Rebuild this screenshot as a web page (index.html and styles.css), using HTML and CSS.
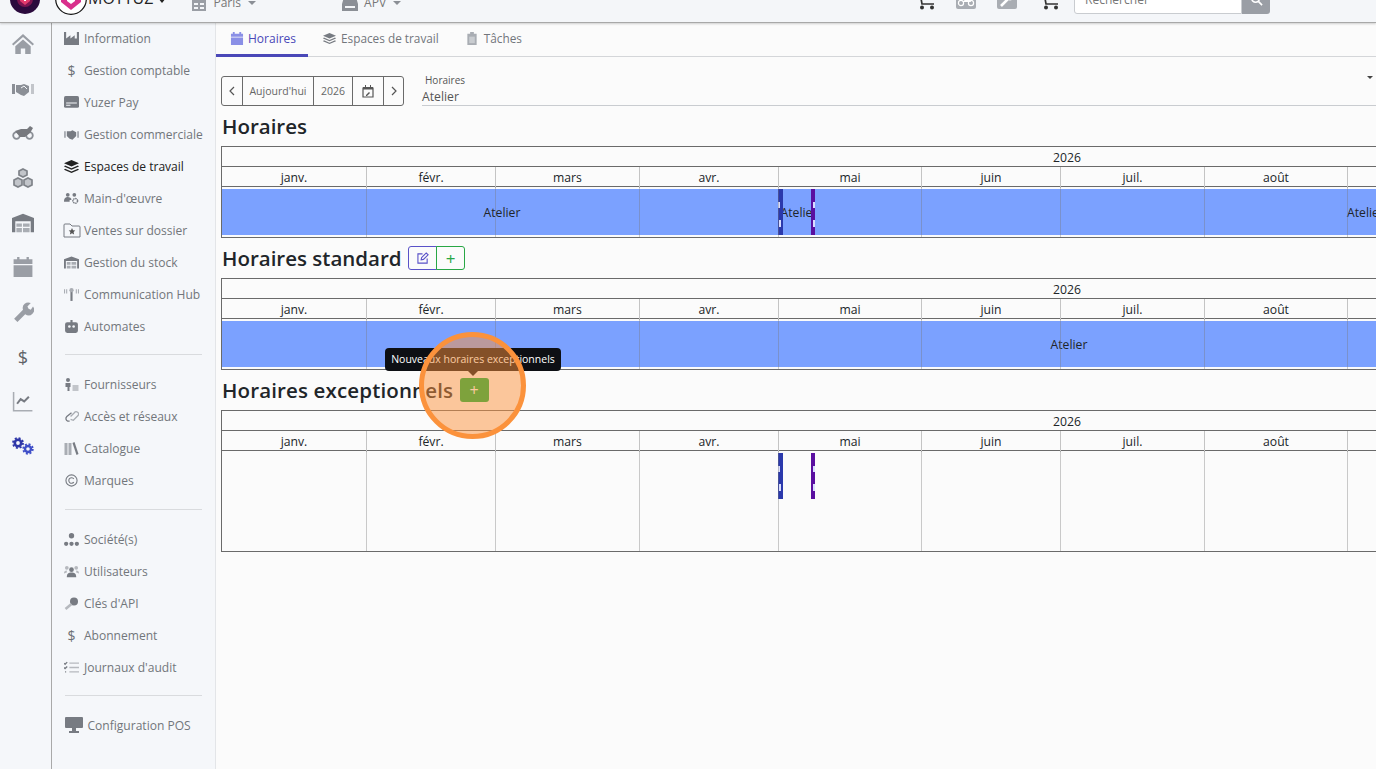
FILE: index.html
```html
<!DOCTYPE html>
<html lang="fr">
<head>
<meta charset="utf-8">
<title>Horaires</title>
<link rel="stylesheet" href="styles.css">
</head>
<body>
<header class="topbar">
  <div class="brand-dot"><svg viewBox="0 0 30 30" width="30" height="30"><circle cx="15" cy="15" r="15" fill="#2b0a3d"/><circle cx="15" cy="15" r="8" fill="#7a1450"/><path d="M15 9l5 3v5l-5 4-5-4v-5z" fill="#e23b6d"/><path d="M14 11h2v6h-2z" fill="#fff"/></svg></div>
  <div class="brand-logo"><svg viewBox="0 0 32 32" width="32" height="32"><circle cx="16" cy="16" r="15.3" fill="#fff" stroke="#111" stroke-width="1.2"/><path d="M6 10l10-6 10 6v9l-10 8-10-8z" fill="#d92f8c"/><path d="M16 4l10 6-10 5-10-5z" fill="#f28a3c"/><path d="M12 12l4-2 4 2v6l-4 3-4-3z" fill="#fff"/></svg></div>
  <div class="brand-name">MOTYUZ</div><span class="caret caret-dark"></span>
  <div class="scope scope-paris">
    <svg class="scope-icon" viewBox="0 0 16 16"><path d="M1 1h14v15H1z" fill="#9a9ea5"/><path d="M3 8h4v2H3zm6 0h4v2H9zm-6 4h4v2H3zm6 0h4v2H9z" fill="#f4f6f9"/></svg>
    <span>Paris</span><span class="caret"></span>
  </div>
  <div class="scope scope-apv">
    <svg class="scope-icon" viewBox="0 0 16 16"><path d="M2 2h12l2 7v7H0V9z" fill="#8b8f96"/><path d="M3 11h10v2H3z" fill="#f4f6f9"/></svg>
    <span>APV</span><span class="caret"></span>
  </div>
  <div class="top-actions">
    <svg class="ta ta-cart" viewBox="0 0 20 30"><path d="M0 4h3l3 17h12M5 16h14" fill="none" stroke="#333" stroke-width="1.700"/><circle cx="6" cy="24.500" r="2" fill="#333"/><circle cx="16" cy="24.500" r="2" fill="#333"/></svg>
    <svg class="ta ta-bike" viewBox="0 0 20 30"><rect y="6" width="20" height="19" rx="2" fill="#a9adb3"/><circle cx="5" cy="19" r="2.6" fill="none" stroke="#fff" stroke-width="1.2"/><circle cx="15" cy="19" r="2.6" fill="none" stroke="#fff" stroke-width="1.2"/><path d="M6 18l4-3h4l1 3z" fill="#fff"/></svg>
    <svg class="ta ta-wrench" viewBox="0 0 20 30"><rect y="6" width="20" height="19" rx="2" fill="#a9adb3"/><path d="M4 22l7-7" stroke="#fff" stroke-width="2.6"/><circle cx="13" cy="13" r="3.4" fill="#fff"/></svg>
    <svg class="ta ta-cart2" viewBox="0 0 22 30"><path d="M0 4h3l3 17h12M5 16h11" fill="none" stroke="#333" stroke-width="1.700"/><rect x="7" y="8" width="9" height="6" fill="#a9adb3"/><path d="M18 12h4l-2 2z" fill="#333"/><circle cx="6" cy="24.500" r="2" fill="#333"/><circle cx="16" cy="24.500" r="2" fill="#333"/></svg>
    <div class="search"><div class="search-input">Rechercher</div><div class="search-btn"><svg viewBox="0 0 14 14" width="13" height="13"><circle cx="6" cy="6" r="4" fill="none" stroke="#fff" stroke-width="1.8"/><path d="M9 9l4 4" stroke="#fff" stroke-width="1.8"/></svg></div></div>
  </div>
</header>

<div class="shell">
  <nav class="rail">
    <svg class="rail-i" viewBox="0 0 20 18"><path d="M10 0L0 9l1.2 1.3L10 2.6l8.8 7.7L20 9zM3 11v7h5v-5h4v5h5v-7l-7-6z" fill="#9a9ea5"/></svg>
    <svg class="rail-i" viewBox="0 0 22 14"><path d="M0 2h3v10H0z" fill="#8b8f96"/><path d="M19 2h3v10h-3z" fill="#c2c5ca"/><path d="M4 3h5l3-1 5 2v6l-5 4-3-1-5-3z" fill="#8b8f96"/><path d="M9 6l3-2 3 3" fill="none" stroke="#f5f7fa" stroke-width="1"/></svg>
    <svg class="rail-i" viewBox="0 0 22 14"><circle cx="4.500" cy="9.500" r="3.300" fill="none" stroke="#8b8f96" stroke-width="1.800"/><circle cx="17.500" cy="9.500" r="3.300" fill="none" stroke="#8b8f96" stroke-width="1.800"/><path d="M3 5l6-2h6l3-3 3 2-3 5-5 4H8z" fill="#77797e"/></svg>
    <svg class="rail-i" viewBox="0 0 20 20"><path d="M10 1l4 2v4l-4 2-4-2V3zM5 10l4 2v5l-4 2-4-2v-5zm10 0l4 2v5l-4 2-4-2v-5z" fill="#c2c5ca" stroke="#7f8389" stroke-width="1.700"/></svg>
    <svg class="rail-i" viewBox="0 0 20 17"><path d="M10 0L0 4v13h3V7h14v10h3V4z" fill="#777b82"/><path d="M4 9h5v3H4zm6 0h6v3h-6zM4 13h5v4H4zm6 0h6v4h-6z" fill="#a9adb3"/></svg>
    <svg class="rail-i" viewBox="0 0 16 17"><path d="M3 0h2v2h6V0h2v2h3v4H0V2h3zM0 7h16v10H0z" fill="#9a9ea5"/></svg>
    <svg class="rail-i" viewBox="0 0 18 18"><path d="M1 15l8-8a5 5 0 0 1 7-6l-3 3 1 2 2 1 2-3a5 5 0 0 1-7 7l-7 7z" fill="#9a9ea5"/></svg>
    <span class="rail-i rail-dollar">$</span>
    <svg class="rail-i" viewBox="0 0 18 17"><path d="M1 0v16h16" fill="none" stroke="#a9adb3" stroke-width="1.300"/><path d="M4 10l3-4 3 2 4-4" fill="none" stroke="#777b82" stroke-width="1.700"/></svg>
    <svg class="rail-i" viewBox="0 0 22 18"><circle cx="6" cy="6" r="3.200" fill="none" stroke="#2f37a8" stroke-width="2.600"/><circle cx="6" cy="6" r="5" fill="none" stroke="#2f37a8" stroke-width="1.800" stroke-dasharray="2 1.930"/><circle cx="16" cy="12" r="3" fill="none" stroke="#3f4fc8" stroke-width="2.400"/><circle cx="16" cy="12" r="4.800" fill="none" stroke="#3f4fc8" stroke-width="1.800" stroke-dasharray="2 1.770"/></svg>
  </nav>

  <aside class="menu">
    <a class="m"><svg viewBox="0 0 14 12"><path d="M0 0h2v6l4-3v3l4-3v3h2V0h2v12H0z" fill="#777b82"/></svg><span>Information</span></a>
    <a class="m"><span class="m-dollar">$</span><span>Gestion comptable</span></a>
    <a class="m"><svg viewBox="0 0 14 12"><rect width="14" height="11" rx="1.500" fill="#777b82"/><path d="M2 6h10v1H2zm0 2h4v1H2z" fill="#f5f7fa"/></svg><span>Yuzer Pay</span></a>
    <a class="m"><svg viewBox="0 0 16 11"><path d="M0 2h2v7H0zm14 0h2v7h-2z" fill="#a9adb3"/><path d="M3 2h4l2-1 4 2v4l-4 4-3-1-3-3z" fill="#777b82"/></svg><span>Gestion commerciale</span></a>
    <a class="m m-active"><svg viewBox="0 0 14 12"><path d="M7 0l7 3-7 3-7-3zM1 5l6 2.600L13 5l1 1-7 3-7-3zm0 3l6 2.600L13 8l1 1-7 3-7-3z" fill="#222"/></svg><span>Espaces de travail</span></a>
    <a class="m"><svg viewBox="0 0 16 13"><circle cx="4" cy="2.500" r="2" fill="#777b82"/><circle cx="11" cy="2.500" r="2" fill="#777b82"/><path d="M0 10c0-4 2-5 4-5s4 1 4 3H6v2z" fill="#777b82"/><circle cx="12" cy="9" r="2.500" fill="none" stroke="#777b82" stroke-width="1.600" stroke-dasharray="1.500 .6"/></svg><span>Main-d'œuvre</span></a>
    <a class="m m-wide"><svg viewBox="0 0 18 15"><path d="M1 14V2a1 1 0 0 1 1-1h5l2 2h7a1 1 0 0 1 1 1v10z" fill="none" stroke="#777b82"/><path d="M9 5l1 2.200 2.300.3-1.700 1.600.5 2.300-2.100-1.200-2.100 1.200.5-2.300-1.700-1.600 2.300-.3z" fill="#555"/></svg><span>Ventes sur dossier</span></a>
    <a class="m"><svg viewBox="0 0 16 13"><path d="M8 0L0 3v10h2V5h12v8h2V3z" fill="#777b82"/><path d="M3 6h4v3H3zm5 0h5v3H8zM3 10h4v3H3zm5 0h5v3H8z" fill="#a9adb3"/></svg><span>Gestion du stock</span></a>
    <a class="m"><svg viewBox="0 0 14 12"><path d="M6 3h2v9H6z" fill="#777b82"/><path d="M.5 1v4M2.500 1v4M11.500 1v4M13.500 1v4" stroke="#a9adb3"/><circle cx="7" cy="2" r="2" fill="#a9adb3"/></svg><span>Communication Hub</span></a>
    <a class="m"><svg viewBox="0 0 14 12"><path d="M6 0h2v2h3a2 2 0 0 1 2 2v6a2 2 0 0 1-2 2H3a2 2 0 0 1-2-2V4a2 2 0 0 1 2-2h3z" fill="#777b82"/><circle cx="5" cy="6" r="1.200" fill="#f5f7fa"/><circle cx="9" cy="6" r="1.200" fill="#f5f7fa"/></svg><span>Automates</span></a>
    <div class="m-sep m-sep-1"></div>
    <a class="m"><svg viewBox="0 0 14 13"><circle cx="3.500" cy="2" r="2" fill="#777b82"/><path d="M1 5h5v4H5v4H3V9H1z" fill="#777b82"/><path d="M8 7h6v6H8z" fill="#c2c5ca"/></svg><span>Fournisseurs</span></a>
    <a class="m"><svg viewBox="0 0 16 12"><path d="M6 11H4a3 3 0 0 1-1-5l5-4" fill="none" stroke="#777b82" stroke-width="1.400"/><path d="M7 6l4-4a2.500 2.500 0 0 1 4 3l-5 5-3-1" fill="none" stroke="#a9adb3" stroke-width="1.400"/></svg><span>Accès et réseaux</span></a>
    <a class="m"><svg viewBox="0 0 14 13"><path d="M0 1h3v12H0zm4 0h3v12H4z" fill="#a9adb3"/><path d="M8 1l2-1 4 12-2 1z" fill="#777b82"/></svg><span>Catalogue</span></a>
    <a class="m"><svg viewBox="0 0 14 14"><circle cx="7" cy="7" r="6" fill="none" stroke="#777b82" stroke-width="1.200"/><path d="M9.500 5.200a3 3 0 1 0 0 3.600" fill="none" stroke="#777b82" stroke-width="1.200"/></svg><span>Marques</span></a>
    <div class="m-sep m-sep-2"></div>
    <a class="m"><svg viewBox="0 0 14 12"><circle cx="7" cy="2.500" r="2.500" fill="#777b82"/><circle cx="2" cy="10" r="2" fill="#777b82"/><circle cx="7" cy="10" r="2" fill="#777b82"/><circle cx="12" cy="10" r="2" fill="#777b82"/></svg><span>Société(s)</span></a>
    <a class="m"><svg viewBox="0 0 16 12"><circle cx="3" cy="2" r="2" fill="#b6b9be"/><circle cx="13" cy="2" r="2" fill="#b6b9be"/><circle cx="8" cy="4" r="2.500" fill="#777b82"/><path d="M3 12c0-4 2-5 5-5s5 1 5 5z" fill="#777b82"/><path d="M0 8c0-2 1-3 3-3v2zm16 0c0-2-1-3-3-3v2z" fill="#b6b9be"/></svg><span>Utilisateurs</span></a>
    <a class="m"><svg viewBox="0 0 14 13"><circle cx="9.500" cy="4.500" r="4" fill="#777b82"/><path d="M7 7l-6 5" stroke="#b6b9be" stroke-width="2.600"/></svg><span>Clés d'API</span></a>
    <a class="m"><span class="m-dollar">$</span><span>Abonnement</span></a>
    <a class="m"><svg viewBox="0 0 14 12"><path d="M5 2h9M5 6h9M5 10h9" stroke="#b6b9be" stroke-width="1.200"/><path d="M0 2l1 1 2-2M0 6l1 1 2-2M1 10h1" fill="none" stroke="#777b82" stroke-width="1.200"/></svg><span>Journaux d'audit</span></a>
    <div class="m-sep m-sep-3"></div>
    <a class="m m-pos"><svg viewBox="0 0 18 16"><rect width="18" height="11" rx="1" fill="#777b82"/><path d="M7 11h4v3H7zM4 14h10v2H4z" fill="#777b82"/></svg><span>Configuration POS</span></a>
  </aside>

  <main class="main">
    <div class="tabs">
      <a class="tab tab-on"><svg viewBox="0 0 13 14"><path d="M2 0h2v2h5V0h2v2h2v3H0V2h2zM0 6h13v8H0z" fill="#8a8fe6"/></svg>Horaires</a>
      <a class="tab"><svg viewBox="0 0 14 12"><path d="M7 0l7 3-7 3-7-3zM1 5l6 2.600L13 5l1 1-7 3-7-3zm0 3l6 2.600L13 8l1 1-7 3-7-3z" fill="#777b82"/></svg>Espaces de travail</a>
      <a class="tab tab-last"><svg viewBox="0 0 10 14"><path d="M3 0h4v2h3v12H0V2h3z" fill="#a9adb3"/><path d="M2 5h6v7H2z" fill="#c9ccd0"/></svg>Tâches</a>
    </div>
    <div class="content">
      <div class="toolbar">
        <div class="btn-group">
          <button class="b b-nav"><svg viewBox="0 0 6 10" width="6" height="10"><path d="M5 1L1 5l4 4" fill="none" stroke="#555" stroke-width="1.200"/></svg></button>
          <button class="b b-today">Aujourd'hui</button>
          <button class="b b-year">2026</button>
          <button class="b b-cal"><svg viewBox="0 0 12 13" width="12" height="13"><path d="M1 3h10v9H1z" fill="none" stroke="#555" stroke-width="1.200"/><path d="M1 2h10v2.500H1zM3 0h1v2H3zm5 0h1v2H8z" fill="#555"/><path d="M4 10l3-3 1 1-3 3H4z" fill="#555"/></svg></button>
          <button class="b b-nav"><svg viewBox="0 0 6 10" width="6" height="10"><path d="M1 1l4 4-4 4" fill="none" stroke="#555" stroke-width="1.200"/></svg></button>
        </div>
        <div class="select">
          <div class="select-label">Horaires</div>
          <div class="select-value">Atelier</div>
          <span class="select-caret"></span>
        </div>
      </div>

      <section class="sec">
        <div class="sec-head"><h2>Horaires</h2></div>
        <div class="tl">
          <div class="tl-year">2026</div>
          <div class="tl-months"><div>janv.</div><div>févr.</div><div>mars</div><div>avr.</div><div>mai</div><div>juin</div><div>juil.</div><div>août</div><div>sept.</div><div>oct.</div><div>nov.</div><div>déc.</div></div>
          <div class="tl-body">
            <div class="tl-row">
              <div class="seg seg-a">Atelier</div>
              <div class="ev ev-blue"><i class="ev-m1"></i><i class="ev-m2"></i></div>
              <div class="seg seg-b">Atelier</div>
              <div class="ev ev-purple"><i class="ev-m1"></i><i class="ev-m2"></i></div>
              <div class="seg seg-c">Atelier</div>
            </div>
            <div class="tl-cols"><i></i><i></i><i></i><i></i><i></i><i></i><i></i><i></i><i></i><i></i><i></i><i></i></div>
          </div>
        </div>
      </section>

      <section class="sec">
        <div class="sec-head"><h2>Horaires standard</h2>
          <div class="head-btns">
            <button class="hb hb-edit"><svg viewBox="0 0 13 13" width="12" height="12"><path d="M11 7v5H1V2h5" fill="none" stroke="#5a52c8" stroke-width="1.200"/><path d="M5 6l5-5 2 2-5 5-2.500.5z" fill="none" stroke="#5a52c8" stroke-width="1.200"/></svg></button>
            <button class="hb hb-add">+</button>
          </div>
        </div>
        <div class="tl">
          <div class="tl-year">2026</div>
          <div class="tl-months"><div>janv.</div><div>févr.</div><div>mars</div><div>avr.</div><div>mai</div><div>juin</div><div>juil.</div><div>août</div><div>sept.</div><div>oct.</div><div>nov.</div><div>déc.</div></div>
          <div class="tl-body">
            <div class="tl-row"><div class="seg seg-full">Atelier</div></div>
            <div class="tl-cols"><i></i><i></i><i></i><i></i><i></i><i></i><i></i><i></i><i></i><i></i><i></i><i></i></div>
          </div>
        </div>
      </section>

      <section class="sec sec-exc">
        <div class="sec-head"><h2>Horaires exceptionnels</h2>
          <button class="hb-solid">+</button>
        </div>
        <div class="tl">
          <div class="tl-year">2026</div>
          <div class="tl-months"><div>janv.</div><div>févr.</div><div>mars</div><div>avr.</div><div>mai</div><div>juin</div><div>juil.</div><div>août</div><div>sept.</div><div>oct.</div><div>nov.</div><div>déc.</div></div>
          <div class="tl-body tl-body-tall">
            <div class="tl-row">
              <div class="gap-a"></div>
              <div class="ev ev-blue"><i class="ev-m1"></i><i class="ev-m2"></i></div>
              <div class="gap-b"></div>
              <div class="ev ev-purple"><i class="ev-m1"></i><i class="ev-m2"></i></div>
            </div>
            <div class="tl-cols"><i></i><i></i><i></i><i></i><i></i><i></i><i></i><i></i><i></i><i></i><i></i><i></i></div>
          </div>
        </div>
      </section>
    </div>
  </main>
</div>

<div class="tooltip">Nouveaux horaires exceptionnels</div>
<div class="spot"></div>
</body>
</html>
```
FILE: styles.css
```css
* { box-sizing: border-box; }
html, body { height: 100%; }
body {
  margin: 0;
  height: 769px;
  overflow: hidden;
  position: relative;
  font-family: "Open Sans", "Noto Sans", sans-serif;
  font-size: 12.050px;
  color: #212529;
  background: #fbfbfb;
}
svg { display: block; flex: none; }

/* top bar */
.topbar {
  height: 23px;
  display: flex;
  align-items: flex-end;
  overflow: hidden;
  background: #f4f6f9;
  border-bottom: 1px solid #a8a8a8;
  box-shadow: 0 1px 2px rgba(0,0,0,.18);
  position: relative;
  z-index: 2;
  padding-left: 10px;
  padding-bottom: 7px;
}
.brand-dot { margin-bottom: 1px; height: 30px; }
.brand-logo { margin-left: 15px; height: 32px; }
.brand-name { font-size: 16px; line-height: 24px; margin-left: 1px; color: #222; margin-bottom: 5px; }
.caret {
  width: 0; height: 0;
  border-left: 4px solid transparent;
  border-right: 4px solid transparent;
  border-top: 4px solid #8b8f96;
  margin-left: 7px;
  margin-bottom: 5px;
}
.caret-dark { border-top-color: #222; border-left-width: 4.500px; border-right-width: 4.500px; border-top-width: 5px; margin-bottom: 12px; margin-left: 5px; }
.scope { display: flex; align-items: flex-end; color: #777; line-height: 18px; margin-bottom: 3px; }
.scope-icon { width: 16px; height: 16px; margin-right: 6px; margin-bottom: 1px; }
.scope-paris { margin-left: 25px; }
.scope-apv { margin-left: 86px; }
.scope .caret { margin-left: 7px; margin-bottom: 7px; }
.top-actions { margin-left: auto; display: flex; align-items: flex-end; padding-right: 106px; }
.ta { height: 30px; margin-bottom: 2px; }
.ta-cart { width: 20px; margin-left: -2px; }
.ta-bike { width: 20px; margin-left: 20px; margin-bottom: 1px; }
.ta-wrench { width: 20px; margin-left: 21px; margin-bottom: 1px; }
.ta-cart2 { width: 22px; margin-left: 23px; }
.search { display: flex; margin-left: 12px; height: 30px; margin-bottom: 1px; }
.search-input {
  width: 168px;
  background: #fff;
  border: 1px solid #c9ccd0;
  border-radius: 3px 0 0 3px;
  padding: 6px 10px 0;
  color: #777;
}
.search-btn {
  width: 28px;
  background: #9a9ea5;
  border-radius: 0 3px 3px 0;
  display: flex;
  align-items: center;
  justify-content: center;
}

/* shell */
.shell { display: flex; height: 746px; }
.rail {
  width: 52px;
  flex: none;
  background: #f5f7fa;
  border-right: 1px solid #a9a9a9;
  display: flex;
  flex-direction: column;
  align-items: center;
  padding: 11px 5px 0 0;
}
.rail-i { width: 22px; height: 20px; margin-bottom: 24.700px; }
.rail-dollar {
  display: block;
  text-align: center;
  font-size: 18px;
  line-height: 20px;
  font-weight: 400;
  color: #5f6368;
}
.menu {
  width: 164px;
  flex: none;
  background: #f5f7fa;
  border-right: 1px solid #e3e5e8;
  padding: 0 12px;
  display: flex;
  flex-direction: column;
}
.m {
  height: 32px;
  flex: none;
  display: flex;
  align-items: center;
  gap: 5px;
  color: #72767b;
  white-space: nowrap;
}
.m:first-child { margin-top: -1px; }
.m svg { width: 15px; height: 13px; }
.m-dollar { width: 15px; text-align: center; font-size: 14px; color: #6c7075; }
.m-active { color: #222; }
.m-wide svg { width: 18px; height: 15px; margin-left: -1px; margin-right: -2px; }
.m-pos { gap: 4.500px; }
.m-pos svg { width: 18px; height: 16px; margin-left: 1px; }
.m-sep { height: 1px; background: #d9dbde; flex: none; margin: 0 1px; }
.m-sep-1 { margin-top: 12px; margin-bottom: 13px; }
.m-sep-2 { margin-top: 13px; margin-bottom: 13px; }
.m-sep-3 { margin-top: 12px; margin-bottom: 13px; }

/* main */
.main { flex: 1; min-width: 0; overflow: hidden; background: #fbfbfb; }
.tabs { height: 34px; display: flex; border-bottom: 1px solid #d4d6d9; }
.tab {
  height: 34px;
  display: flex;
  align-items: center;
  gap: 5px;
  padding: 0 15px 4px 15px;
  color: #72767b;
  font-size: 11.800px;
  white-space: nowrap;
  flex: none;
}
.tab svg { width: 13px; height: 13px; }
.tab-on { color: #4a48b8; border-bottom: 3px solid #4a48b8; padding: 0 12px 1px 14px; gap: 4px; font-size: 12px; width: 92px; }
.tab-on svg { width: 14px; }
.tab-last { padding-left: 13px; gap: 7px; }
.tab-last svg { width: 10px; }
.content { padding: 19px 0 0 5px; }

.toolbar { display: flex; height: 30px; }
.btn-group { display: flex; height: 30px; flex: none; border: 1px solid #6a6a6a; border-radius: 3px; }
.b {
  background: transparent;
  border: 0;
  border-right: 1px solid #6a6a6a;
  padding: 0;
  height: 100%;
  font: inherit;
  font-size: 10.500px;
  color: #666;
  display: flex;
  align-items: center;
  justify-content: center;
}
.b:last-child { border-right: 0; width: 19px; }
.b-nav { width: 21px; }
.b-today { width: 71px; }
.b-year { width: 39px; }
.b-cal { width: 31px; }
.select {
  flex: 1;
  margin-left: 18px;
  border-bottom: 1px solid #c9ccd0;
  position: relative;
}
.select-label { font-size: 10px; line-height: 14px; padding-left: 3px; color: #555; margin-top: -3px; }
.select-value { font-size: 12.200px; line-height: 18px; color: #555; margin-top: 1px; }
.select-caret {
  position: absolute;
  right: 3px;
  top: 0;
  width: 0; height: 0;
  border-left: 3px solid transparent;
  border-right: 3px solid transparent;
  border-top: 3px solid #444;
}

.sec-head { height: 40px; display: flex; align-items: center; gap: 6.500px; padding-left: 1px; }
h2 { margin: 0; font-size: 20.500px; font-weight: 600; line-height: 30px; color: #212529; white-space: nowrap; }
.sec-exc h2 { letter-spacing: .14px; }
.head-btns { display: flex; height: 24px; }
.hb { width: 29px; height: 24px; padding: 0; background: transparent; display: flex; align-items: center; justify-content: center; font: inherit; }
.hb-edit { border: 1px solid #5a52c8; border-radius: 3px 0 0 3px; }
.hb-add { border: 1px solid #28a745; border-radius: 0 3px 3px 0; color: #28a745; font-size: 17px; line-height: 1; margin-left: -1px; }
.hb-solid { width: 29px; height: 24px; padding: 0; border: 0; border-radius: 3px; background: #00b23c; color: #fff; font: inherit; font-size: 16px; line-height: 1; }

.tl { width: 1692px; border: 1px solid #6a6a6a; font-size: 12.200px; --cols: 145px 129px 144px 139px 143px 139px 144px 143px 139px 144px 139px 144px; }
.tl-year { height: 20px; line-height: 21px; text-align: center; border-bottom: 1px solid #6a6a6a; }
.tl-months { height: 20px; display: grid; grid-template-columns: var(--cols); border-bottom: 1px solid #6a6a6a; }
.tl-months div { line-height: 21px; text-align: center; border-right: 1px solid #c4c4c4; }
.tl-body { position: relative; height: 50px; padding-top: 2px; }
.tl-body-tall { height: 100px; }
.tl-cols { position: absolute; inset: 0; display: grid; grid-template-columns: var(--cols); pointer-events: none; }
.tl-cols i { border-right: 1px solid rgba(120,120,120,.38); }
.tl-row { display: flex; height: 46px; }
.seg { background: #7ba1ff; display: flex; align-items: center; justify-content: center; white-space: nowrap; color: #212529; padding-left: 4px; }
.seg-a { width: 556px; flex: none; }
.seg-b { width: 28px; flex: none; }
.seg-c { flex: 1; }
.seg-full { flex: 1; }
.gap-a { width: 556px; flex: none; }
.gap-b { width: 28px; flex: none; }
.ev { width: 5px; flex: none; position: relative; overflow: hidden; }
.ev-purple { width: 4px; background: #5a0fa0; }
.ev-blue { background: #2b39ac; }
.ev i { position: absolute; background: #d9ddff; }
.ev-m1 { left: 0; top: 13px; width: 2px; height: 6px; }
.ev-m2 { left: 1px; top: 31px; width: 2px; height: 7px; }
.ev-purple .ev-m1 { left: 2px; width: 2px; }
.ev-purple .ev-m2 { left: 2px; }

/* overlays */
.tooltip {
  position: absolute;
  left: 385px;
  top: 348px;
  width: 176px;
  height: 23px;
  background: #0d0f14;
  color: #fff;
  border-radius: 4px;
  font-size: 10.500px;
  line-height: 23px;
  text-align: center;
  white-space: nowrap;
  z-index: 5;
}
.tooltip::after {
  content: "";
  position: absolute;
  left: 83px;
  top: 23px;
  border-left: 5px solid transparent;
  border-right: 5px solid transparent;
  border-top: 5px solid #0d0f14;
}
.spot {
  position: absolute;
  left: 419px;
  top: 332px;
  width: 107px;
  height: 107px;
  border-radius: 50%;
  border: 5px solid #fb923c;
  background: rgba(251,146,60,.5);
  z-index: 6;
}
```
